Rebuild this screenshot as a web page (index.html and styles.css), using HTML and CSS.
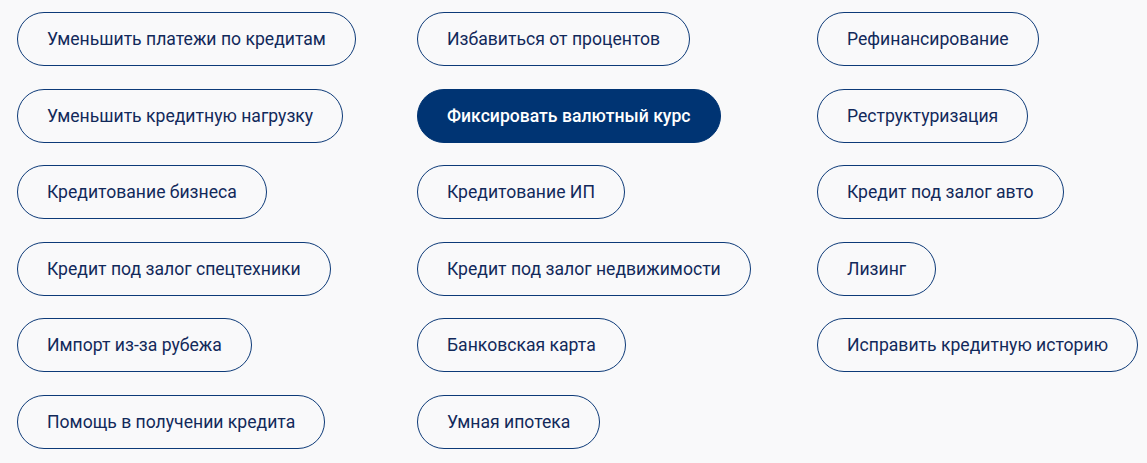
FILE: index.html
```html
<!DOCTYPE html>
<html lang="ru">
<head>
    <meta charset="UTF-8">
    <meta name="viewport" content="width=device-width, initial-scale=1.0">
    <title>Услуги</title>
    <link rel="stylesheet" href="styles.css">
</head>
<body>
    <div class="tags">
        <a class="tag" href="#">Уменьшить платежи по кредитам</a>
        <a class="tag" href="#">Избавиться от процентов</a>
        <a class="tag" href="#">Рефинансирование</a>

        <a class="tag" href="#">Уменьшить кредитную нагрузку</a>
        <a class="tag active" href="#">Фиксировать валютный курс</a>
        <a class="tag" href="#">Реструктуризация</a>

        <a class="tag" href="#">Кредитование бизнеса</a>
        <a class="tag" href="#">Кредитование ИП</a>
        <a class="tag" href="#">Кредит под залог авто</a>

        <a class="tag" href="#">Кредит под залог спецтехники</a>
        <a class="tag" href="#">Кредит под залог недвижимости</a>
        <a class="tag" href="#">Лизинг</a>

        <a class="tag" href="#">Импорт из-за рубежа</a>
        <a class="tag" href="#">Банковская карта</a>
        <a class="tag" href="#">Исправить кредитную историю</a>

        <a class="tag" href="#">Помощь в получении кредита</a>
        <a class="tag" href="#">Умная ипотека</a>
    </div>
</body>
</html>
```

FILE: styles.css
```css
body {
    margin: 0;
    background-color: #f9f9fa;
    font-family: Roboto, "Liberation Sans", sans-serif;
}

.tags {
    display: grid;
    grid-template-columns: repeat(3, 400px);
    row-gap: 22.6px;
    padding: 12px 0 0 17px;
}

.tag {
    justify-self: start;
    box-sizing: border-box;
    height: 54px;
    display: flex;
    align-items: center;
    padding: 0 29px;
    border: 1px solid #0d3a78;
    border-radius: 27px;
    color: #12295a;
    font-size: 17.6px;
    text-decoration: none;
    white-space: nowrap;
}

.tag.active {
    background-color: #003473;
    border-color: #003473;
    color: #fff;
    font-weight: 500;
}
```
